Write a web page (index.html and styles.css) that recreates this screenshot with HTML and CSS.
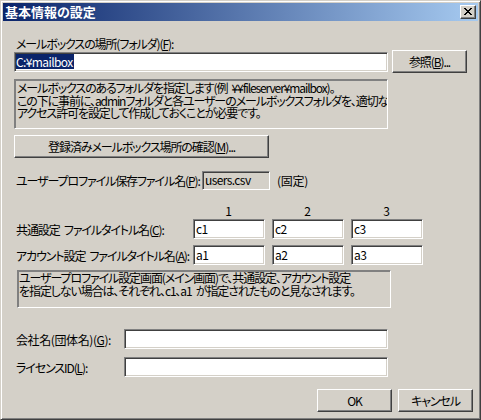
FILE: index.html
```html
<!DOCTYPE html>
<html lang="ja">
<head>
<meta charset="utf-8">
<title>基本情報の設定</title>
<link rel="stylesheet" href="styles.css">
</head>
<body>
<div class="window">
  <div class="titlebar">
    <span class="title">基本情報の設定</span>
    <span class="close"><svg width="8" height="7" viewBox="0 0 8 7"><path d="M0 0h2v1H0zM6 0h2v1H6zM1 1h2v1H1zM5 1h2v1H5zM2 2h4v1H2zM3 3h2v1H3zM2 4h4v1H2zM1 5h2v1H1zM5 5h2v1H5zM0 6h2v1H0zM6 6h2v1H6z" fill="#000"/></svg></span>
  </div>
  <div class="content">
    <div class="lbl path-lbl">メールボックスの場所(フォルダ)(<u>F</u>):</div>
    <div class="path-row">
      <div class="edit path"><span class="sel">C:¥mailbox</span></div>
      <div class="btn browse">参照(<u>B</u>)...</div>
    </div>
    <div class="note note1">メールボックスのあるフォルダを指定します(例<span class="sp"> </span>¥¥fileserver¥mailbox)。<br>この下に事前に、adminフォルダと各ユーザーのメールボックスフォルダを、適切な<br>アクセス許可を設定して作成しておくことが必要です。</div>
    <div class="btn confirm">登録済みメールボックス場所の確認(<u>M</u>)...</div>
    <div class="profile-row">
      <div class="lbl profile-lbl">ユーザープロファイル保存ファイル名(<u>P</u>):</div>
      <div class="edit readonly">users.csv</div>
      <div class="fixed">(固定)</div>
    </div>
    <div class="grid3 heads">
      <div></div>
      <div class="colhead">1</div>
      <div class="colhead">2</div>
      <div class="colhead">3</div>
    </div>
    <div class="grid3 row-c">
      <div class="lbl">共通設定<span class="sp"> </span>ファイルタイトル名(<u>C</u>):</div>
      <div class="edit">c1</div>
      <div class="edit">c2</div>
      <div class="edit">c3</div>
    </div>
    <div class="grid3 row-a">
      <div class="lbl">アカウント設定<span class="sp"> </span>ファイルタイトル名(<u>A</u>):</div>
      <div class="edit">a1</div>
      <div class="edit">a2</div>
      <div class="edit">a3</div>
    </div>
    <div class="note note2">ユーザープロファイル設定画面(メイン画面)で、共通設定、アカウント設定<br>を指定しない場合は、それぞれ、c1、a1<span class="sp"> </span>が指定されたものと見なされます。</div>
    <div class="field-row company">
      <div class="lbl kanji">会社名(団体名)(<u>G</u>):</div>
      <div class="edit wide"></div>
    </div>
    <div class="field-row license">
      <div class="lbl">ライセンスID(<u>L</u>):</div>
      <div class="edit wide"></div>
    </div>
    <div class="actions">
      <div class="btn action">OK</div>
      <div class="btn action">キャンセル</div>
    </div>
  </div>
</div>
</body>
</html>
```
FILE: styles.css
```css
* { box-sizing: border-box; }
html, body { margin: 0; padding: 0; background: #d4d0c8; }
body {
  font-family: "Noto Sans CJK JP", "Noto Sans", sans-serif;
  font-size: 12px;
  font-feature-settings: "palt";
  letter-spacing: -1.1px;
  color: #000;
}
u { text-decoration: underline; text-underline-offset: 1px; }
.sp { letter-spacing: 1.5px; }

.window {
  width: 481px;
  height: 420px;
  background: #d4d0c8;
  border-style: solid;
  border-width: 1px;
  border-color: #d4d0c8 #404040 #404040 #d4d0c8;
  box-shadow: inset 1px 1px #fff, inset -1px -1px #808080;
  padding: 2px;
  display: flex;
  flex-direction: column;
  overflow: hidden;
}

.titlebar {
  height: 18px;
  background: linear-gradient(90deg, #0a246a 0%, #a6caf0 100%);
  display: flex;
  align-items: flex-start;
  justify-content: space-between;
}
.title {
  color: #fff;
  font-weight: bold;
  font-size: 13px;
  letter-spacing: 0;
  line-height: 18px;
  padding-left: 2px;
  white-space: nowrap;
}
.close {
  width: 16px;
  height: 14px;
  margin: 2px 2px 0 0;
  background: #d4d0c8;
  border-style: solid;
  border-width: 1px;
  border-color: #fff #404040 #404040 #fff;
  box-shadow: inset -1px -1px #808080;
  display: flex;
  align-items: center;
  justify-content: center;
  padding: 0 1px 1px 0;
}
.close svg { display: block; }

.content {
  padding-left: 11px;
  display: flex;
  flex-direction: column;
  align-items: flex-start;
}

.lbl {
  padding-left: 2px;
  white-space: nowrap;
  line-height: 13px;
}
.kanji { letter-spacing: -0.4px; }
.path-lbl { margin-top: 16px; }

.edit {
  height: 20px;
  background: #fff;
  border-style: solid;
  border-width: 1px;
  border-color: #808080 #fff #fff #808080;
  box-shadow: inset 1px 1px #404040, inset -1px -1px #d4d0c8;
  padding: 1px 1px 0 2px;
  line-height: 16px;
  letter-spacing: -0.6px;
  white-space: nowrap;
  overflow: hidden;
}
.readonly { background: #d4d0c8; }

.btn {
  height: 23px;
  background: #d4d0c8;
  border-style: solid;
  border-width: 1px;
  border-color: #fff #404040 #404040 #fff;
  box-shadow: inset -1px -1px #808080;
  display: flex;
  align-items: center;
  justify-content: center;
  white-space: nowrap;
  padding-bottom: 1px;
}

.path-row {
  display: flex;
  align-items: flex-start;
  gap: 4px;
}
.path {
  width: 374px;
  margin-top: 2px;
  padding-left: 1px;
  padding-top: 1px;
}
.sel {
  background: #0a246a;
  color: #fff;
  display: inline-block;
  line-height: 15px;
  padding-right: 1px;
}
.browse { width: 75px; }

.note {
  width: 374px;
  border-style: solid;
  border-width: 1px;
  border-color: #808080 #fff #fff #808080;
  box-shadow: inset 1px 1px #808080;
  line-height: 12.5px;
  white-space: nowrap;
  overflow: hidden;
}
.note1 {
  margin-top: 6px;
  height: 50px;
  padding: 2px 0 0 2px;
}
.confirm {
  width: 255px;
  margin-top: 6px;
}

.profile-row {
  margin-top: 13px;
  display: flex;
  align-items: center;
}
.profile-row .lbl { width: 188px; }
.profile-row .readonly {
  width: 68px;
  height: 19px;
  padding-top: 0;
}
.fixed {
  margin-left: 7px;
  line-height: 13px;
  letter-spacing: -0.3px;
  white-space: nowrap;
}

.grid3 {
  display: grid;
  grid-template-columns: 172px 72px 72px 72px;
  column-gap: 7px;
  align-items: center;
}
.heads { margin-top: 14px; }
.colhead { text-align: center; line-height: 13px; padding-right: 2px; }
.row-c { margin-top: 2px; }
.row-a { margin-top: 6px; }
.grid3 .edit { padding-left: 2px; }

.note2 {
  margin-top: 5px;
  margin-left: 3px;
  height: 38px;
  padding: 1px 0 0 1px;
}

.field-row {
  display: flex;
  align-items: center;
}
.field-row .lbl { width: 110px; }
.company { margin-top: 21px; }
.license { margin-top: 8px; }
.wide { width: 264px; }

.actions {
  margin-top: 12px;
  align-self: flex-end;
  margin-right: 5px;
  display: flex;
  gap: 6px;
}
.action { width: 75px; }
```
